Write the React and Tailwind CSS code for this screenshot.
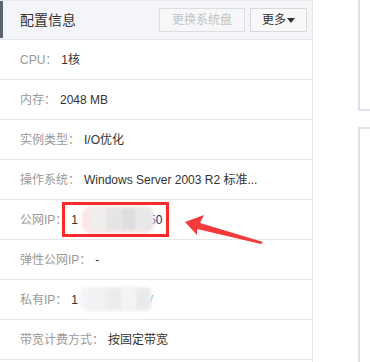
import React from "react";

const font = { fontFamily: '"Liberation Sans", "Noto Sans CJK SC", sans-serif' };

const Row = ({ label, children, className = "" }) => (
  <div className={`relative flex items-center h-[40px] border-b border-[#e8e8e8] pl-[20px] text-[12px] ${className}`}>
    <span className="text-[#999] mr-[4px]">{label}</span>
    <span className="text-[#333] flex items-center">{children}</span>
  </div>
);

const Blur = ({ className }) => <div className={`absolute blur-[1.5px] ${className}`}></div>;

export default function App() {
  return (
    <div className="relative w-[370px] h-[362px] bg-white overflow-hidden flex" style={font}>
      <div className="w-[313px] shrink-0 border-r border-[#e6e6e6] h-full">
        <div className="relative flex items-center justify-between h-[40px] bg-[#f4f5f9] border-b border-[#e3e5ea] border-t border-t-[#e8eaee] pl-[20px] pr-[5px]">
          <div className="absolute left-0 top-0 bottom-[1px] w-[3px] bg-[#5c6370]"></div>
          <span className="text-[14px] text-[#333]">配置信息</span>
          <div className="flex gap-[5px]">
            <button className="w-[86px] h-[24px] border border-[#dcdde1] bg-[#f6f7f9] text-[12px] text-[#c3c3c3]">
              更换系统盘
            </button>
            <button className="w-[57px] h-[24px] border border-[#d8d9dd] bg-[#f8f8f9] text-[12px] text-[#333] flex items-center justify-center">
              更多
              <svg width="8" height="5" viewBox="0 0 8 5" className="ml-[1px]">
                <path d="M0 0h8L4 5z" fill="#333" />
              </svg>
            </button>
          </div>
        </div>
        <Row label="CPU：">1核</Row>
        <Row label="内存：">2048 MB</Row>
        <Row label="实例类型：">I/O优化</Row>
        <Row label="操作系统：">Windows Server 2003 R2 标准...</Row>
        <Row label="公网IP：">
          <span>1</span>
          <span className="ml-[71px] text-[#1a2a6c]">50</span>
          <Blur className="left-[82px] top-[6px] w-[72px] h-[28px] bg-[#fde6e6] rounded-[10px]" />
          <Blur className="left-[90px] top-[8px] w-[16px] h-[22px] bg-[#efefef]" />
          <Blur className="left-[106px] top-[8px] w-[16px] h-[22px] bg-[#e5e5e5]" />
          <Blur className="left-[122px] top-[8px] w-[14px] h-[22px] bg-[#dcdddf]" />
          <Blur className="left-[136px] top-[8px] w-[16px] h-[22px] bg-[#e8e8e8]" />
          <div className="absolute left-[62px] top-[2px] w-[107px] h-[35px] border-[3px] border-[#fb2b2b]"></div>
        </Row>
        <Row label="弹性公网IP：">-</Row>
        <Row label="私有IP：">
          <span>1</span>
          <span className="ml-[72px] text-[#1a4a9c] text-[10px]">/</span>
          <Blur className="left-[80px] top-[7px] w-[72px] h-[24px] bg-[#f4f5f7] rounded-[8px]" />
          <Blur className="left-[88px] top-[8px] w-[18px] h-[22px] bg-[#f0f2f4]" />
          <Blur className="left-[106px] top-[8px] w-[16px] h-[22px] bg-[#ebecee]" />
          <Blur className="left-[122px] top-[8px] w-[14px] h-[22px] bg-[#f3f4f6]" />
          <Blur className="left-[136px] top-[8px] w-[14px] h-[22px] bg-[#e9eaec]" />
        </Row>
        <Row label="带宽计费方式：">按固定带宽</Row>
      </div>
      <div className="ml-[45px] flex flex-col gap-[16px] flex-1">
        <div className="h-[111px] border-l-2 border-b-2 border-[#dfe2ea]"></div>
        <div className="flex-1 border-l-2 border-t-2 border-[#dfe2ea]"></div>
      </div>
      <svg className="absolute left-0 top-0 pointer-events-none" width="370" height="362" viewBox="0 0 370 362">
        <polygon points="185,222 204,215 200,223 263,242 261,244 197,229 197,235" fill="#f43a3a" />
      </svg>
    </div>
  );
}
